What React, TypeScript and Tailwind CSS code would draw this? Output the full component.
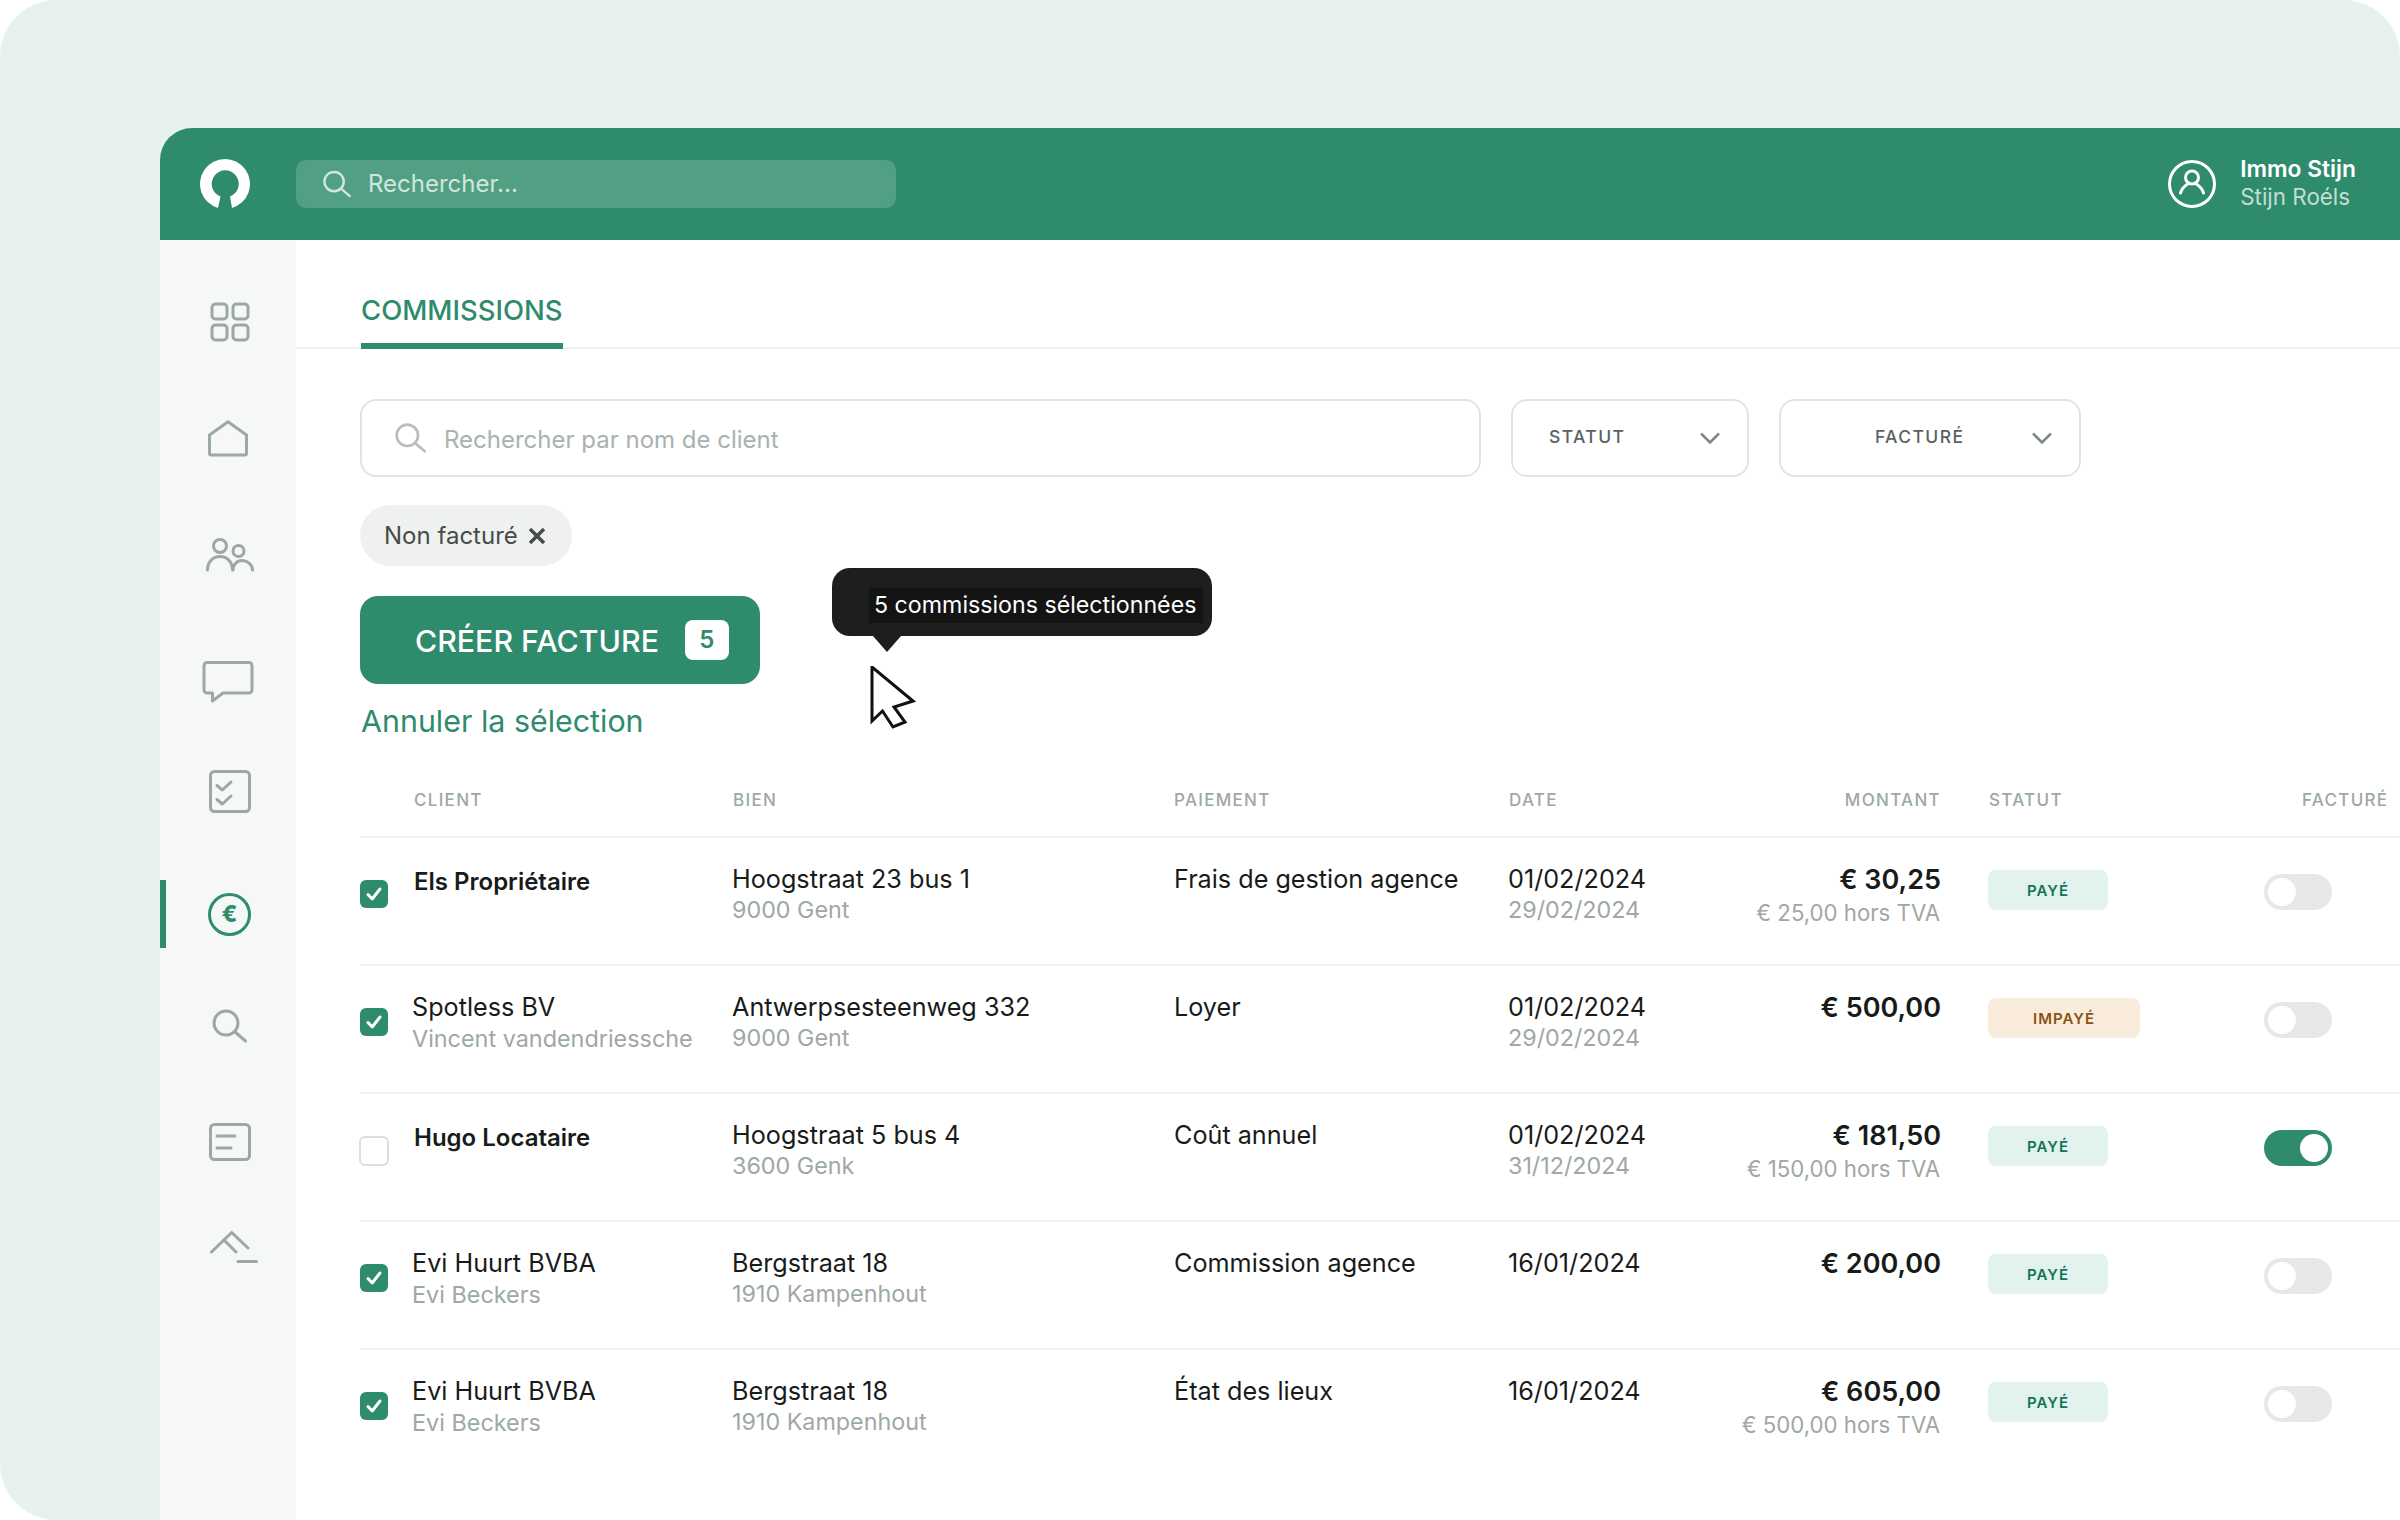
type Row = {
  checked: boolean;
  client: string;
  bold?: boolean;
  contact?: string;
  street: string;
  city: string;
  payment: string;
  date: string;
  due?: string;
  amount: string;
  excl?: string;
  status: "PAYÉ" | "IMPAYÉ";
  invoiced?: boolean;
};

const rows: Row[] = [
  { checked: true, client: "Els Propriétaire", bold: true, street: "Hoogstraat 23 bus 1", city: "9000 Gent", payment: "Frais de gestion agence", date: "01/02/2024", due: "29/02/2024", amount: "€ 30,25", excl: "€ 25,00 hors TVA", status: "PAYÉ" },
  { checked: true, client: "Spotless BV", contact: "Vincent vandendriessche", street: "Antwerpsesteenweg 332", city: "9000 Gent", payment: "Loyer", date: "01/02/2024", due: "29/02/2024", amount: "€ 500,00", status: "IMPAYÉ" },
  { checked: false, client: "Hugo Locataire", bold: true, street: "Hoogstraat 5 bus 4", city: "3600 Genk", payment: "Coût annuel", date: "01/02/2024", due: "31/12/2024", amount: "€ 181,50", excl: "€ 150,00 hors TVA", status: "PAYÉ", invoiced: true },
  { checked: true, client: "Evi Huurt BVBA", contact: "Evi Beckers", street: "Bergstraat 18", city: "1910 Kampenhout", payment: "Commission agence", date: "16/01/2024", amount: "€ 200,00", status: "PAYÉ" },
  { checked: true, client: "Evi Huurt BVBA", contact: "Evi Beckers", street: "Bergstraat 18", city: "1910 Kampenhout", payment: "État des lieux", date: "16/01/2024", amount: "€ 605,00", excl: "€ 500,00 hors TVA", status: "PAYÉ" },
];

const columns = "grid grid-cols-[53px_320px_441px_334px_200px_233px_323px_136px]";

function SearchIcon({ className }: { className: string }) {
  return (
    <svg viewBox="0 0 36 33" fill="none" stroke="currentColor" strokeWidth="3" strokeLinecap="round" className={className}>
      <circle cx="15" cy="13.5" r="12" />
      <path d="M24 22.5 34.5 31.5" />
    </svg>
  );
}

function Chevron() {
  return (
    <svg viewBox="0 0 20 12" fill="none" stroke="#7d8885" strokeWidth="2.5" className="h-3 w-5">
      <path d="M1 1.5 10 10.5 19 1.5" />
    </svg>
  );
}

function Sidebar() {
  return (
    <aside className="relative flex w-[136px] shrink-0 flex-col bg-[#f5f8f7] pl-[42px] text-[#9ca8a4]">
      <svg viewBox="0 0 40 40" fill="none" stroke="currentColor" strokeWidth="3" className="ml-[8px] mt-[62px] h-10 w-10">
        <rect x="2" y="2" width="15" height="15" rx="3.5" />
        <rect x="23" y="2" width="15" height="15" rx="3.5" />
        <rect x="2" y="23" width="15" height="15" rx="3.5" />
        <rect x="23" y="23" width="15" height="15" rx="3.5" />
      </svg>
      <svg viewBox="0 0 40 37" fill="none" stroke="currentColor" strokeWidth="3" strokeLinejoin="round" className="ml-[6px] mt-[78px] h-[37px] w-10">
        <path d="M1.5 15 20 1.8 38.5 15V33a2 2 0 0 1-2 2H3.5a2 2 0 0 1-2-2Z" />
      </svg>
      <svg viewBox="0 0 48 34" fill="none" stroke="currentColor" strokeWidth="3" strokeLinecap="round" className="ml-[4px] mt-[81px] h-[34px] w-12">
        <circle cx="14" cy="8" r="6.5" />
        <circle cx="32.5" cy="13" r="5.5" />
        <path d="M1.5 32C1.5 24 7 18.5 14 18.5S26.5 24 26.5 32" />
        <path d="M27 32C27 26.5 31 22.5 36 22.5S46.5 26.5 46.5 32" />
      </svg>
      <svg viewBox="0 0 52 44" fill="none" stroke="currentColor" strokeWidth="3" strokeLinejoin="round" className="mt-[88px] h-11 w-[52px]">
        <path d="M5 2.5H47a3 3 0 0 1 3 3V30a3 3 0 0 1-3 3H21L10.5 41V33H5a3 3 0 0 1-3-3V5.5a3 3 0 0 1 3-3Z" />
      </svg>
      <svg viewBox="0 0 42 43" fill="none" stroke="currentColor" strokeWidth="3" strokeLinecap="round" strokeLinejoin="round" className="ml-[7px] mt-[66px] h-[43px] w-[42px]">
        <rect x="1.5" y="1.5" width="39" height="40" rx="4" />
        <path d="M8 15.5 13.3 20 22 12" />
        <path d="M8 29.5 13.3 34 22 26" />
      </svg>
      <div className="ml-[6px] mt-[80px] flex h-[43px] w-[43px] items-center justify-center rounded-full border-[3px] border-[#2e8b6c] text-[23px] font-extrabold leading-none text-[#2e8b6c]">
        €
      </div>
      <SearchIcon className="ml-[9px] mt-[73px] h-[34px] w-9" />
      <svg viewBox="0 0 42 38" fill="none" stroke="currentColor" strokeWidth="3" strokeLinecap="round" className="ml-[7px] mt-[80px] h-[38px] w-[42px]">
        <rect x="1.5" y="1.5" width="39" height="35" rx="4" />
        <path d="M8 13H26" />
        <path d="M8 25H22" />
      </svg>
      <svg viewBox="0 0 48 33" fill="none" stroke="currentColor" strokeWidth="3" strokeLinecap="round" strokeLinejoin="round" className="ml-[8px] mt-[70px] h-[33px] w-12">
        <path d="M1.5 21 21.7 1.5 38 17" />
        <path d="M14 9 26 21" />
        <path d="M28 30.5H46.5" />
      </svg>
      <div className="absolute left-0 top-[640px] h-[68px] w-[6px] bg-[#2e8b6c]" />
    </aside>
  );
}

function TableRow({ row }: { row: Row }) {
  return (
    <div className={`${columns} h-[128px] border-t-2 border-[#eeefef]`}>
      <div className="pt-[42px]">
        {row.checked ? (
          <div className="flex h-7 w-7 items-center justify-center rounded-md bg-[#2e8b6c]">
            <svg viewBox="0 0 20 20" fill="none" stroke="white" strokeWidth="3" strokeLinecap="round" strokeLinejoin="round" className="h-5 w-5">
              <path d="M4 10.5 8.2 15 16 5" />
            </svg>
          </div>
        ) : (
          <div className="-ml-px h-[30px] w-[30px] rounded-md border-2 border-[#dcdfde] bg-white" />
        )}
      </div>
      <div className={row.bold ? "pl-px pt-[28px]" : "-ml-px pt-[26px]"}>
        <div className={row.bold ? "text-[24px] font-semibold leading-[31px] text-[#171c1a]" : "text-[25.2px] leading-[31px] text-[#171c1a]"}>{row.client}</div>
        {row.contact && <div className="text-[23.4px] leading-[31px] text-[#9ea8a5]">{row.contact}</div>}
      </div>
      <div className="-ml-px pt-[26px]">
        <div className="text-[25.2px] leading-[31px] text-[#171c1a]">{row.street}</div>
        <div className="text-[23.3px] leading-[30px] text-[#9ea8a5]">{row.city}</div>
      </div>
      <div className="pt-[26px] text-[25.2px] leading-[31px] text-[#171c1a]">{row.payment}</div>
      <div className="pt-[26px]">
        <div className="text-[25.2px] leading-[31px] text-[#171c1a]">{row.date}</div>
        {row.due && <div className="text-[23.3px] leading-[30px] text-[#9ea8a5]">{row.due}</div>}
      </div>
      <div className="pt-[25px] text-right">
        <div className="text-[27px] font-semibold leading-[33px] text-[#171c1a]">{row.amount}</div>
        {row.excl && <div className="pr-px text-[22.2px] leading-[33px] text-[#9ea8a5]">{row.excl}</div>}
      </div>
      <div className="pl-[47px] pt-[32px]">
        {row.status === "PAYÉ" ? (
          <div className="flex h-10 w-[120px] items-center justify-center rounded-lg bg-[#e1f3ec] pt-[2px] text-[15px] font-semibold tracking-[1px] text-[#14745a]">
            PAYÉ
          </div>
        ) : (
          <div className="flex h-10 w-[152px] items-center justify-center rounded-lg bg-[#faecdc] pt-[2px] text-[15px] font-semibold tracking-[1px] text-[#8a5214]">
            IMPAYÉ
          </div>
        )}
      </div>
      <div className="pt-[36px]">
        {row.invoiced ? (
          <div className="flex h-9 w-[68px] items-center justify-end rounded-full bg-[#2e8b6c] pr-1">
            <div className="h-7 w-7 rounded-full bg-white" />
          </div>
        ) : (
          <div className="flex h-9 w-[68px] items-center rounded-full bg-[#e6e8e7] pl-1">
            <div className="h-7 w-7 rounded-full bg-white" />
          </div>
        )}
      </div>
    </div>
  );
}

export default function App() {
  return (
    <div className="h-[1520px] w-[2400px] overflow-hidden bg-white font-['Inter',sans-serif]">
      <div className="h-full rounded-[56px] rounded-br-none bg-[#e8f2ed] pl-[160px] pt-[128px]">
        <div className="flex h-[1392px] flex-col overflow-hidden rounded-tl-[32px] bg-white">
          <header className="flex h-[112px] shrink-0 items-center bg-[#2e8b6c] pl-[39px] pr-[44px]">
            <svg viewBox="0 0 52 50" className="h-[50px] w-[52px]" fill="white">
              <path d="M19 49A25 25 0 1 1 33 49L31 37.5A13.5 13.5 0 1 0 21.5 37.5Z" />
            </svg>
            <div className="ml-[45px] flex h-12 w-[600px] items-center rounded-[10px] bg-[#51a084] pl-[26px] text-[#d2e6de]">
              <SearchIcon className="h-7 w-[29px]" />
              <span className="ml-[17px] text-[24px]">Rechercher...</span>
            </div>
            <div className="ml-auto flex items-center">
              <svg viewBox="0 0 48 48" fill="none" stroke="white" strokeWidth="3" strokeLinecap="round" className="h-12 w-12">
                <circle cx="24" cy="24" r="22.5" />
                <circle cx="24" cy="17.5" r="6.5" />
                <path d="M12.5 33C14 28 17 25.5 20.5 23.5" />
                <path d="M35.5 33C34 28 31 25.5 27.5 23.5" />
              </svg>
              <div className="-mt-[3px] ml-[24px] leading-[28px]">
                <div className="text-[22.8px] font-semibold text-white">Immo Stijn</div>
                <div className="text-[22.4px] text-[#c4ded4]">Stijn Roéls</div>
              </div>
            </div>
          </header>
          <div className="flex min-h-0 flex-1">
            <Sidebar />
            <main className="relative min-w-0 flex-1">
              <nav className="h-[109px] border-b-2 border-[#eeefef] pl-[65px] pt-[52px]">
                <div className="inline-block h-[57px] border-b-[6px] border-[#2e8b6c] pt-px text-[27.5px] font-medium leading-[34px] text-[#2e8b6c]">
                  COMMISSIONS
                </div>
              </nav>
              <div className="pl-[64px]">
                <div className="mt-[50px] flex">
                  <div className="flex h-[78px] w-[1121px] items-center rounded-[16px] border-2 border-[#e2e4e4] pl-[32px] text-[#b7bebc]">
                    <SearchIcon className="h-[30px] w-[32px]" />
                    <span className="ml-[18px] mt-[3px] text-[24px] text-[#a9b2af]">Rechercher par nom de client</span>
                  </div>
                  <div className="ml-[30px] flex h-[78px] w-[238px] items-center justify-between rounded-[16px] border-2 border-[#e2e4e4] pl-[36px] pr-[27px]">
                    <span className="-mt-[2px] text-[17.5px] font-medium tracking-[1.4px] text-[#59625f]">STATUT</span>
                    <Chevron />
                  </div>
                  <div className="ml-[30px] flex h-[78px] w-[302px] items-center rounded-[16px] border-2 border-[#e2e4e4] pl-[94px]">
                    <span className="-mt-[2px] text-[17.5px] font-medium tracking-[1.4px] text-[#59625f]">FACTURÉ</span>
                    <span className="ml-[68px]">
                      <Chevron />
                    </span>
                  </div>
                </div>
                <div className="mt-[28px] flex h-[61px] w-[212px] items-center rounded-full bg-[#eff1f0] pl-[24px] text-[#454c4a]">
                  <span className="text-[24px]">Non facturé</span>
                  <svg viewBox="0 0 18 18" fill="none" stroke="currentColor" strokeWidth="3.5" className="ml-[10px] h-[18px] w-[18px]">
                    <path d="M2 2 16 16M16 2 2 16" />
                  </svg>
                </div>
                <button className="mt-[30px] flex h-[88px] w-[400px] items-center rounded-[18px] bg-[#2e8b6c] pl-[55px] text-white">
                  <span className="mt-[3px] text-[30.3px] font-medium">CRÉER FACTURE</span>
                  <span className="ml-[26px] flex h-10 w-11 items-center justify-center rounded-lg bg-white text-[24px] font-semibold text-[#2e8b6c]">5</span>
                </button>
                <div className="mt-[17px] pl-px text-[30.4px] leading-[40px] text-[#2e8b6c]">Annuler la sélection</div>
                <div className={`${columns} mt-[47px] h-[48px] text-[17px] font-medium tracking-[1.3px] text-[#9ca8a4]`}>
                  <div />
                  <div className="pl-px">CLIENT</div>
                  <div>BIEN</div>
                  <div>PAIEMENT</div>
                  <div className="pl-px">DATE</div>
                  <div className="text-right">MONTANT</div>
                  <div className="relative pl-[48px]">
                    STATUT
                    <span className="absolute left-[361px] top-0">FACTURÉ</span>
                  </div>
                  <div />
                </div>
                {rows.map((row, index) => (
                  <TableRow key={index} row={row} />
                ))}
              </div>
              <div className="absolute left-[536px] top-[328px] flex h-[68px] w-[380px] items-start rounded-[18px] bg-[#1c1f1e] pl-[37px] pt-[20px]">
                <div className="flex h-[35px] w-[334px] items-center whitespace-nowrap bg-[#141414] pl-[5px] text-[23.2px] text-white">5 commissions sélectionnées</div>
                <div className="absolute left-[41px] top-[68px] h-0 w-0 border-x-[14px] border-t-[16px] border-x-transparent border-t-[#1c1f1e]" />
              </div>
              <svg viewBox="0 0 46 64" fill="white" stroke="#111" strokeWidth="3" className="absolute left-[574px] top-[426px] h-16 w-[46px]">
                <path d="M2 1 43 35 24 41 35 56 23 61 12.5 45 2 55Z" />
              </svg>
            </main>
          </div>
        </div>
      </div>
    </div>
  );
}
